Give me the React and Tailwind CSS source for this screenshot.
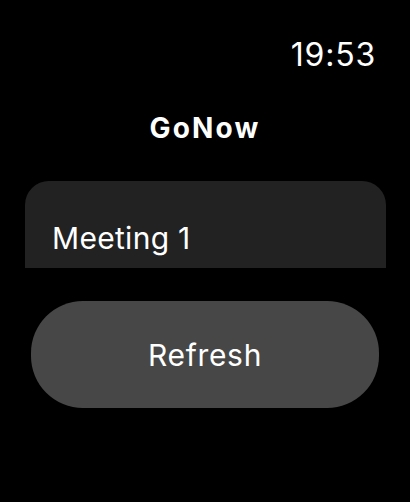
export default function App() {
  return (
    <div
      className="h-[502px] w-[410px] overflow-hidden bg-black text-white"
      style={{ fontFamily: "Inter, 'Noto Sans', sans-serif" }}
    >
      <div className="flex justify-end pr-[34px] pt-[39px] text-[32px] leading-none tracking-[0.8px]">
        <span>19:53</span>
      </div>

      <div className="mt-[43px] text-center text-[28px] font-bold leading-none tracking-[2.2px]">
        GoNow
      </div>

      <div className="ml-[25px] mt-[39px] h-[87px] w-[361px] rounded-t-[24px] bg-[#222222] pl-[27px] pt-[42px]">
        <span className="text-[30px] leading-none tracking-[0.3px]">Meeting 1</span>
      </div>

      <button className="ml-[31px] mt-[33px] flex h-[107px] w-[348px] items-center justify-center rounded-[52px] bg-[#474747] text-[30px] leading-none tracking-[0.7px] text-white">
        Refresh
      </button>
    </div>
  );
}
